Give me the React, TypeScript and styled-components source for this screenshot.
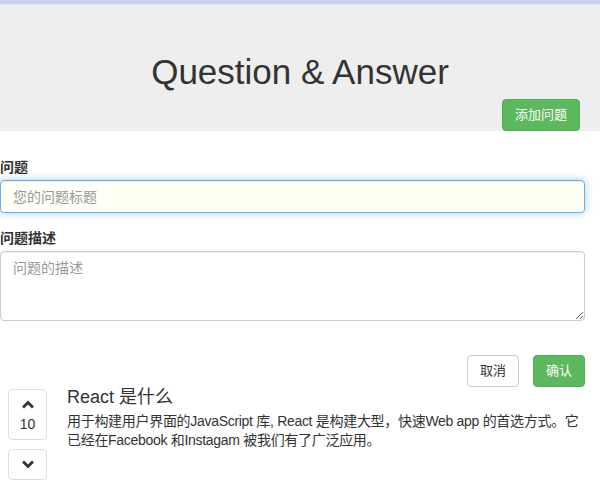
import styled, { createGlobalStyle } from 'styled-components';

const GlobalStyle = createGlobalStyle`
  * {
    box-sizing: border-box;
  }
  body {
    margin: 0;
    font-family: 'Liberation Sans', 'Noto Sans CJK SC', sans-serif;
    font-size: 14px;
    line-height: 20px;
    color: #333;
    background: #fff;
  }
`;

const TopBar = styled.div`
  height: 5px;
  background: #c8d2ea;
  border-bottom: 1px solid #dfe6ef;
`;

const Jumbotron = styled.header`
  background: #eee;
  padding: 47px 20px 0;
`;

const Title = styled.h1`
  margin: 0;
  font-size: 35px;
  font-weight: 400;
  line-height: 40px;
  text-align: center;
  color: #333;
`;

const HeaderActions = styled.div`
  display: flex;
  justify-content: flex-end;
  margin-top: 7px;
  margin-bottom: -4px;
`;

const Button = styled.button<{ $variant?: 'success' | 'default' }>`
  height: 32px;
  padding: 5px 12px;
  font-family: inherit;
  font-size: 13px;
  line-height: 20px;
  border-radius: 4px;
  cursor: pointer;
  border: 1px solid ${p => (p.$variant === 'success' ? '#4cae4c' : '#ccc')};
  background: ${p => (p.$variant === 'success' ? '#5cb85c' : '#fff')};
  color: ${p => (p.$variant === 'success' ? '#fff' : '#333')};
`;

const Form = styled.form`
  padding: 30px 15px 0 0;
`;

const FormGroup = styled.div`
  margin-bottom: 15px;
`;

const Label = styled.label`
  display: block;
  font-weight: 700;
  margin-bottom: 3px;
`;

const Input = styled.input`
  display: block;
  width: 100%;
  height: 33px;
  padding: 6px 12px;
  font-family: inherit;
  font-size: 14px;
  color: #555;
  background: #fffff6;
  border: 1px solid #66afe9;
  border-radius: 4px;
  outline: none;
  box-shadow: inset 0 1px 1px rgba(0, 0, 0, 0.075), 0 0 8px rgba(102, 175, 233, 0.6);
  &::placeholder {
    color: #999;
  }
`;

const TextArea = styled.textarea`
  display: block;
  width: 100%;
  height: 70px;
  padding: 6px 12px;
  font-family: inherit;
  font-size: 14px;
  line-height: 20px;
  color: #555;
  border: 1px solid #ccc;
  border-radius: 4px;
  box-shadow: inset 0 1px 1px rgba(0, 0, 0, 0.075);
  outline: none;
  &::placeholder {
    color: #999;
  }
`;

const FormActions = styled.div`
  display: flex;
  justify-content: flex-end;
  gap: 14px;
  margin-top: 34px;
`;

const QuestionItem = styled.div`
  display: flex;
  gap: 20px;
  padding: 2px 12px 0 8px;
`;

const VoteColumn = styled.div`
  display: flex;
  flex-direction: column;
  gap: 9px;
  flex: 0 0 39px;
`;

const VoteBox = styled.button<{ $tall?: boolean }>`
  display: flex;
  flex-direction: column;
  align-items: center;
  justify-content: center;
  gap: 5px;
  width: 39px;
  height: ${p => (p.$tall ? '51px' : '31px')};
  padding: ${p => (p.$tall ? '3px 0 0' : '0')};
  background: #fff;
  border: 1px solid #ddd;
  border-radius: 4px;
  color: #333;
  font-family: inherit;
  font-size: 14px;
  line-height: 20px;
  cursor: pointer;
`;

const Content = styled.div`
  flex: 1;
`;

const QuestionTitle = styled.h4`
  margin: 0 0 7px;
  font-size: 18px;
  font-weight: 400;
  line-height: 16px;
`;

const Description = styled.p`
  margin: 0;
  font-size: 14px;
  line-height: 19px;
  letter-spacing: -0.3px;
`;

const Chevron = ({ up }: { up?: boolean }) => (
  <svg width="12" height="10" viewBox="0 0 12 10">
    <polyline
      points={up ? '2,7.5 6,3.5 10,7.5' : '2,2.5 6,6.5 10,2.5'}
      fill="none"
      stroke="#333"
      strokeWidth="2.8"
      strokeLinecap="square"
    />
  </svg>
);

export default function App() {
  return (
    <>
      <GlobalStyle />
      <TopBar />
      <Jumbotron>
        <Title>Question &amp; Answer</Title>
        <HeaderActions>
          <Button $variant="success">添加问题</Button>
        </HeaderActions>
      </Jumbotron>
      <Form onSubmit={e => e.preventDefault()}>
        <FormGroup>
          <Label htmlFor="qtitle">问题</Label>
          <Input id="qtitle" placeholder="您的问题标题" />
        </FormGroup>
        <div>
          <Label htmlFor="qdesc">问题描述</Label>
          <TextArea id="qdesc" rows={3} placeholder="问题的描述" />
        </div>
        <FormActions>
          <Button type="button">取消</Button>
          <Button $variant="success">确认</Button>
        </FormActions>
      </Form>
      <QuestionItem>
        <VoteColumn>
          <VoteBox $tall>
            <Chevron up />
            <span>10</span>
          </VoteBox>
          <VoteBox>
            <Chevron />
          </VoteBox>
        </VoteColumn>
        <Content>
          <QuestionTitle>React 是什么</QuestionTitle>
          <Description>
            用于构建用户界面的JavaScript 库, React 是构建大型，快速Web app 的首选方式。它已经在Facebook 和Instagam 被我们有了广泛应用。
          </Description>
        </Content>
      </QuestionItem>
    </>
  );
}
